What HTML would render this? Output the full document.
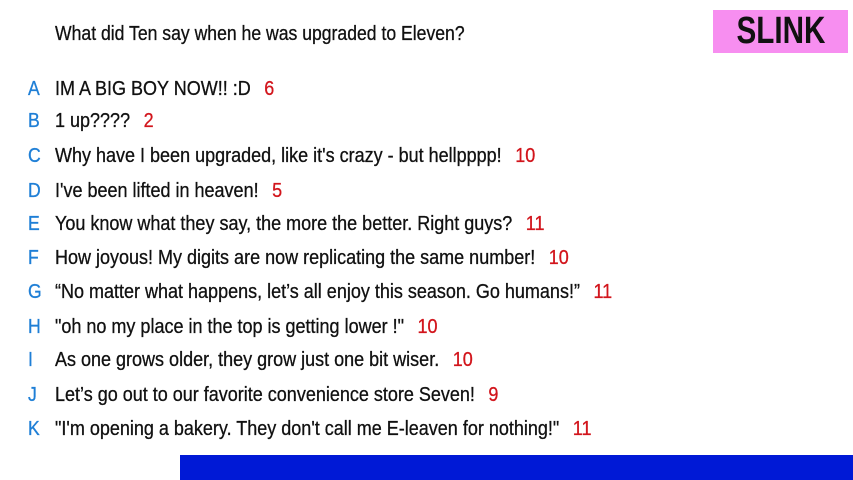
<!DOCTYPE html>
<html><head><meta charset="utf-8"><style>
html,body{margin:0;padding:0;width:853px;height:480px;background:#fff;overflow:hidden}
body{font-family:"Liberation Sans",sans-serif;color:#111;position:relative}
.l{position:absolute;left:0;font-size:20px;line-height:24px;white-space:nowrap;-webkit-text-stroke:0.3px}
.k{position:absolute;left:28px;color:#1f7fd6;transform:scaleX(0.88);transform-origin:left}
.t{position:absolute;left:55px;transform:scaleX(0.9);transform-origin:left}
.n{color:#d2151c;margin-left:15px}
.q{position:absolute;left:55px;top:22px;font-size:20px;line-height:24px;white-space:nowrap;transform:scaleX(0.88);transform-origin:left;-webkit-text-stroke:0.3px}
.logo{position:absolute;left:713px;top:10px;width:135px;height:43px;background:#f78ef0;font-weight:bold;font-size:38px;line-height:43px;text-align:center;color:#111}
.logo span{display:inline-block;transform:scaleX(0.78)}
.bar{position:absolute;left:180px;top:455px;width:673px;height:25px;background:#0019d6}
</style></head><body>
<div class="q">What did Ten say when he was upgraded to Eleven?</div>
<div class="logo"><span>SLINK</span></div>
<div class="l" style="top:77px"><span class="k">A</span><span class="t">IM A BIG BOY NOW!! :D<span class="n">6</span></span></div>
<div class="l" style="top:109px"><span class="k">B</span><span class="t">1 up????<span class="n">2</span></span></div>
<div class="l" style="top:144px"><span class="k">C</span><span class="t">Why have I been upgraded, like it's crazy - but hellpppp!<span class="n">10</span></span></div>
<div class="l" style="top:179px"><span class="k">D</span><span class="t">I've been lifted in heaven!<span class="n">5</span></span></div>
<div class="l" style="top:212px"><span class="k">E</span><span class="t">You know what they say, the more the better. Right guys?<span class="n">11</span></span></div>
<div class="l" style="top:246px"><span class="k">F</span><span class="t">How joyous! My digits are now replicating the same number!<span class="n">10</span></span></div>
<div class="l" style="top:280px"><span class="k">G</span><span class="t">“No matter what happens, let’s all enjoy this season. Go humans!”<span class="n">11</span></span></div>
<div class="l" style="top:315px"><span class="k">H</span><span class="t">"oh no my place in the top is getting lower !"<span class="n">10</span></span></div>
<div class="l" style="top:348px"><span class="k">I</span><span class="t">As one grows older, they grow just one bit wiser.<span class="n">10</span></span></div>
<div class="l" style="top:383px"><span class="k">J</span><span class="t">Let’s go out to our favorite convenience store Seven!<span class="n">9</span></span></div>
<div class="l" style="top:417px"><span class="k">K</span><span class="t">"I'm opening a bakery. They don't call me E-leaven for nothing!"<span class="n">11</span></span></div>
<div class="bar"></div>
</body></html>
